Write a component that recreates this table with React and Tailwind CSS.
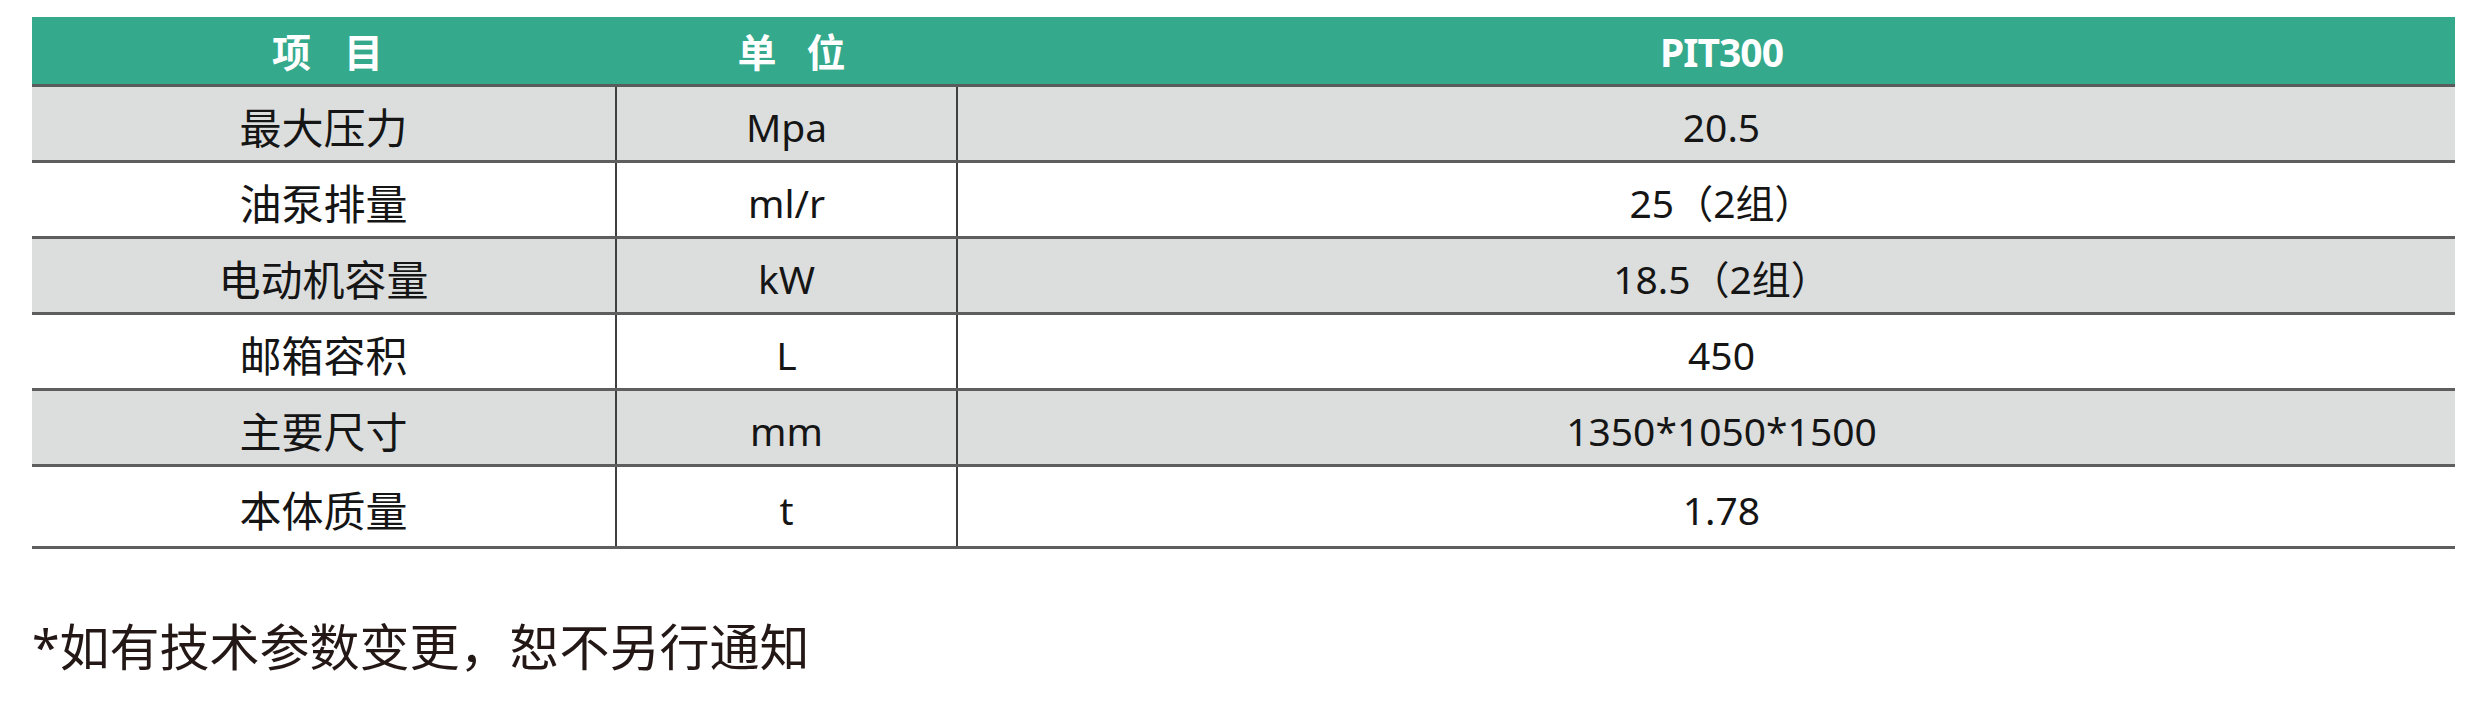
import React from 'react';

const rows = [
  { name: '最大压力', unit: 'Mpa', value: '20.5' },
  { name: '油泵排量', unit: 'ml/r', value: '25（2组）' },
  { name: '电动机容量', unit: 'kW', value: '18.5（2组）' },
  { name: '邮箱容积', unit: 'L', value: '450' },
  { name: '主要尺寸', unit: 'mm', value: '1350*1050*1500' },
  { name: '本体质量', unit: 't', value: '1.78' },
];

const font = { fontFamily: '"Noto Sans", "Noto Sans CJK SC", sans-serif' };

export default function App() {
  return (
    <div className="h-[715px] w-full bg-white pl-[32px] pt-[17px] pr-[25px] text-[#151515]" style={font}>
      {/* 表头 */}
      <div className="grid grid-cols-[585px_341px_1fr] h-[67px] bg-[#34a98c] text-white font-bold text-[39px] border-b-[3px] border-[#5b5b5b] box-content">
        <div className="flex items-center justify-center gap-[33px] pt-[4px] pl-[6px]">
          <span>项</span>
          <span>目</span>
        </div>
        <div className="flex items-center justify-center gap-[30px] pt-[4px] pl-[8px]">
          <span>单</span>
          <span>位</span>
        </div>
        <div className="flex items-center justify-center pt-[4px] pl-[30px] tracking-tight">PIT300</div>
      </div>

      {/* 参数行 */}
      {rows.map((row, i) => (
        <div
          key={row.name}
          className={`grid grid-cols-[585px_341px_1fr] box-content border-b-[3px] border-[#5e5e5e] ${
            i === rows.length - 1 ? 'h-[79px]' : 'h-[73px]'
          } ${i % 2 === 0 ? 'bg-[#dcdedd]' : 'bg-white'}`}
        >
          <div className="flex items-center justify-center pt-[8px] text-[42px] leading-none border-r-2 border-[#3f3f3f]">
            {row.name}
          </div>
          <div className="flex items-center justify-center pt-[6px] text-[39px] leading-none border-r-2 border-[#3f3f3f]">
            {row.unit}
          </div>
          <div className="flex items-center justify-center pt-[6px] pl-[30px] text-[39px] leading-none">
            {row.value}
          </div>
        </div>
      ))}

      {/* 备注 */}
      <p className="mt-[73px] text-[50px] leading-[50px] text-[#231815]">*如有技术参数变更，恕不另行通知</p>
    </div>
  );
}
